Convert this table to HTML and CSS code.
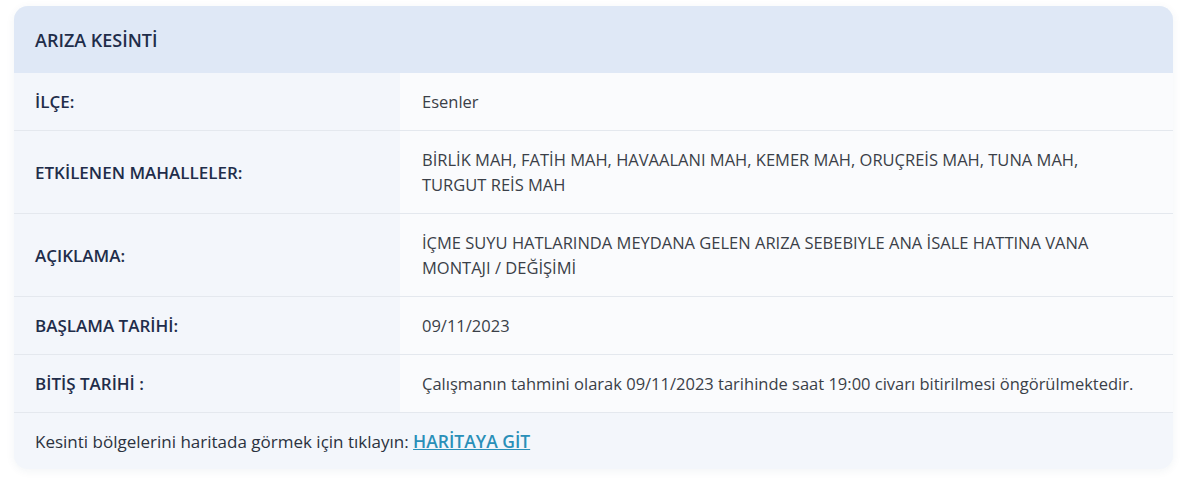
FILE: index.html
```html
<!DOCTYPE html>
<html lang="tr">
<head>
    <meta charset="UTF-8">
    <meta name="viewport" content="width=device-width, initial-scale=1.0">
    <title>Arıza Kesinti</title>
    <link rel="stylesheet" href="styles.css">
</head>
<body>
    <div class="card">
        <div class="card-head">ARIZA KESİNTİ</div>
        <div class="row">
            <div class="label">İLÇE:</div>
            <div class="value">Esenler</div>
        </div>
        <div class="row">
            <div class="label">ETKİLENEN MAHALLELER:</div>
            <div class="value">BİRLİK MAH, FATİH MAH, HAVAALANI MAH, KEMER MAH, ORUÇREİS MAH, TUNA MAH,<br>TURGUT REİS MAH</div>
        </div>
        <div class="row">
            <div class="label">AÇIKLAMA:</div>
            <div class="value">İÇME SUYU HATLARINDA MEYDANA GELEN ARIZA SEBEBIYLE ANA İSALE HATTINA VANA<br>MONTAJI / DEĞİŞİMİ</div>
        </div>
        <div class="row">
            <div class="label">BAŞLAMA TARİHİ:</div>
            <div class="value">09/11/2023</div>
        </div>
        <div class="row">
            <div class="label">BİTİŞ TARİHİ :</div>
            <div class="value">Çalışmanın tahmini olarak 09/11/2023 tarihinde saat 19:00 civarı bitirilmesi öngörülmektedir.</div>
        </div>
        <div class="card-foot">
            <p>Kesinti bölgelerini haritada görmek için tıklayın: <a href="#">HARİTAYA GİT</a></p>
        </div>
    </div>
</body>
</html>
```

FILE: styles.css
```css
body {
    margin: 0;
    padding: 6px 27px 15px 14px;
    background-color: #ffffff;
    font-family: "Open Sans", sans-serif;
    font-size: 16.5px;
    color: #2b3240;
}
.card {
    border-radius: 14px;
    overflow: hidden;
    background-color: #f4f7fb;
    box-shadow: 0 2px 10px rgba(40, 60, 100, 0.06);
}
.card-head {
    background-color: #dfe8f6;
    height: 67px;
    padding-left: 21px;
    display: flex;
    align-items: center;
    font-size: 18px;
    font-weight: 600;
    color: #1f2d4a;
}
.row {
    display: flex;
    border-top: 1px solid #e4e8ee;
}
.row:nth-child(2) {
    border-top: none;
}
.label {
    width: 365px;
    flex-shrink: 0;
    padding: 0 0 0 21px;
    display: flex;
    align-items: center;
    background-color: #f3f6fb;
    color: #1f2d4a;
    font-size: 17px;
    font-weight: 600;
}
.value {
    flex: 1;
    background-color: #fafbfd;
    padding: 16px 22px;
    line-height: 25px;
    color: #3a3f48;
}
.card-foot {
    border-top: 1px solid #e4e8ee;
    height: 56px;
    padding-left: 21px;
    display: flex;
    align-items: center;
    background-color: #f3f6fb;
    color: #2b3240;
    font-size: 17px;
}
.card-foot p {
    margin: 0;
}
.card-foot a {
    color: #2a8fb8;
    font-size: 17.5px;
    font-weight: 600;
    text-decoration: underline;
}
```
